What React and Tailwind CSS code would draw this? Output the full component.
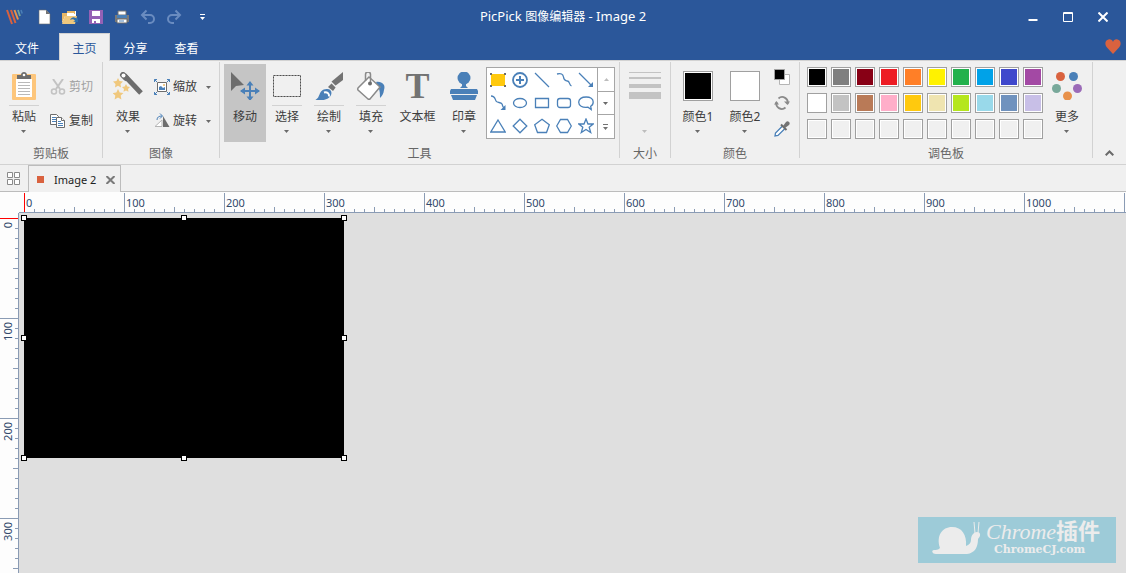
import React, { useEffect, useState } from 'react';
import clsx from 'clsx';

const BLUE = '#4a80b8';
const GRAY = '#737373';

const PALETTE = [
    '#000000', '#7f7f7f', '#880015', '#ed1c24', '#ff7f27', '#fff200', '#22b14c', '#00a2e8', '#3f48cc', '#a349a4',
    '#ffffff', '#c3c3c3', '#b97a57', '#ffaec9', '#ffc90e', '#efe4b0', '#b5e61d', '#99d9ea', '#7092be', '#c8bfe7',
    '#f0f0f0', '#f0f0f0', '#f0f0f0', '#f0f0f0', '#f0f0f0', '#f0f0f0', '#f0f0f0', '#f0f0f0', '#f0f0f0', '#f0f0f0',
];

const TICKS = [0, 1, 2, 3, 4, 5, 6, 7, 8, 9];

function Caret({ light }) {
    return (
        <svg width="6" height="3" viewBox="0 0 6 3" className="block shrink-0">
            <path d="M0 0h5L2.500 3z" fill={light ? '#bdbdbd' : '#6a6a6a'} />
        </svg>
    );
}

/* ---------- quick access icons ---------- */

function Logo() {
    return (
        <svg width="17" height="16" viewBox="0 0 17 16" fill="none" strokeWidth="2">
            <path d="M1 1l5 14" stroke="#d9623f" />
            <path d="M5 1l4.500 13" stroke="#d9623f" />
            <path d="M8.500 1l3.500 9.500" stroke="#e8934a" />
            <path d="M12 1l2 6" stroke="#78a89a" strokeWidth="1.800" />
            <path d="M15 1l1.200 3.500" stroke="#4a80b8" strokeWidth="1.500" />
        </svg>
    );
}

function NewIcon() {
    return (
        <svg width="16" height="16" viewBox="0 0 16 16">
            <path d="M3 1h7l4 4v10H3z" fill="#fff" stroke="#6d6d6d" strokeWidth=".6" />
            <path d="M10 1v4h4z" fill="#737373" />
        </svg>
    );
}

function OpenIcon() {
    return (
        <svg width="18" height="16" viewBox="0 0 18 16">
            <path d="M1 14V4h5V2h9v6H5z" fill="#fff" />
            <path d="M1 14V4h5V2h8v3H8v2H4z" fill="#e8b765" />
            <path d="M6 4h7v3H6z" fill="#fff" />
            <path d="M1 15L4 7h12l-2 8z" fill="#f0c87d" />
            <path d="M9 11c2-4 5-3 7-1l1-2v5h-5l2-1c-1-2-3-2-5-1z" fill="#2f70ad" />
        </svg>
    );
}

function SaveIcon() {
    return (
        <svg width="16" height="16" viewBox="0 0 16 16">
            <path d="M1 1h14v14H1z" fill="#9561b5" />
            <path d="M4 2h8v5H4zM4 10h8v4H4z" fill="#fff" />
            <path d="M6 12h2v2H6z" fill="#9561b5" />
        </svg>
    );
}

function PrintIcon() {
    return (
        <svg width="16" height="16" viewBox="0 0 16 16">
            <path d="M1 6h14v7H1z" fill="#7a7a7a" />
            <path d="M4 2h8v4H4z" fill="#fff" stroke="#737373" />
            <path d="M3 6h10v3H3z" fill="#4a80b8" />
            <path d="M3 10h10v4H3z" fill="#fff" stroke="#6d6d6d" />
            <path d="M5 12h5" stroke="#4a80b8" />
        </svg>
    );
}

function UndoIcon({ flip }) {
    return (
        <svg width="16" height="16" viewBox="0 0 16 16" fill="none" stroke="#6a8cc0" strokeWidth="2">
            {flip
                ? <path d="M9.500 1.500L14 6 9.500 10.500M14 6H6a4 4 0 0 0 0 8h2" />
                : <path d="M6.500 1.500L2 6l4.500 4.500M2 6h8a4 4 0 0 1 0 8H8" />}
        </svg>
    );
}

/* ---------- ribbon icons ---------- */

function PasteIcon() {
    return (
        <svg width="24" height="28" viewBox="0 0 24 28">
            <rect y="2" width="24" height="26" rx="1" fill="#fdc67c" />
            <path d="M4 7h16v18H4z" fill="#fff" />
            <path d="M6 10.500h12M6 13.500h12M6 16.500h12M6 19.500h12M6 22.500h12" stroke="#b9b9b9" />
            <path d="M5 7V3h4c0-4 6-4 6 0h4v4z" fill="#6d6d6d" />
            <circle cx="12" cy="3" r="1.300" fill="#fff" />
        </svg>
    );
}

function CutIcon() {
    return (
        <svg width="16" height="16" viewBox="0 0 16 16" fill="none" stroke="#c3c3c3" strokeWidth="2">
            <path d="M3 0l7 10M13 0L6 10" />
            <circle cx="4" cy="12.500" r="2.500" strokeWidth="1.600" />
            <circle cx="12" cy="12.500" r="2.500" strokeWidth="1.600" />
        </svg>
    );
}

function CopyIcon() {
    return (
        <svg width="16" height="16" viewBox="0 0 16 16" fill="#fff" stroke="#6d6d6d">
            <path d="M.5 1.500h6l2 2v8h-8z" />
            <path d="M2 4.500h4M2 6.500h4M2 8.500h4" stroke={BLUE} />
            <path d="M6.500 4.500h5l3 3v7h-8z" />
            <path d="M11.500 4.500v3h3" />
            <path d="M8 8.500h3M8 10.500h5M8 12.500h5" stroke={BLUE} />
        </svg>
    );
}

function EffectsIcon() {
    return (
        <svg width="30" height="28" viewBox="0 0 30 28">
            <path d="M11 3l17 18" stroke="#6d6d6d" strokeWidth="5" />
            <path d="M10 3l3 3" stroke="#6d6d6d" strokeWidth="6" strokeLinecap="round" />
            <circle cx="10.500" cy="3.500" r="2" fill="#fff" />
            <g fill="#f0c87d">
                <path d="M5 6l1.500 3 3.500.5-2.500 2.500.5 3.500-3-1.700-3 1.700.5-3.500L0 9.500 3.500 9z" />
                <path d="M13 12l1.300 2.500 2.700.4-2 2 .5 2.800-2.500-1.300-2.500 1.300.5-2.800-2-2 2.700-.4z" />
                <path d="M5 17l1.700 3.500 3.800.5-2.800 2.600.7 3.900L5 25.600l-3.400 1.900.7-3.900L-.5 21l3.800-.5z" />
            </g>
        </svg>
    );
}

function ResizeIcon() {
    return (
        <svg width="16" height="16" viewBox="0 0 16 16" fill="none">
            <path d="M3.500 3.500h9v9h-9z" fill="#fff" stroke="#6d6d6d" />
            <path d="M5 11V8l2-1 2 2 2-1v3z" fill={BLUE} />
            <circle cx="10" cy="6" r="1" fill="#e8b765" />
            <path d="M.5 3V.5H3M.5.5L3 3M13 .5h2.500V3m0-2.500L13 3M.5 13v2.500H3M.5 15.500L3 13M13 15.500h2.500V13m0 2.500L13 13" stroke={BLUE} />
        </svg>
    );
}

function RotateIcon() {
    return (
        <svg width="16" height="16" viewBox="0 0 16 16" fill="none">
            <path d="M9 3v11H15.500z" fill="#6d6d6d" />
            <path d="M8 7v6.500H1z" stroke="#b5b5b5" fill="#fff" />
            <path d="M3 7c0-3 2-4 5-4M6 .5L8.500 3 6 5.500" stroke={BLUE} />
        </svg>
    );
}

function MoveIcon() {
    return (
        <svg width="30" height="28" viewBox="0 0 30 28">
            <path d="M1 0v19l5-5 8-1z" fill="#6d6d6d" />
            <path d="M20 10v18M11 19h18" stroke={BLUE} strokeWidth="2" />
            <path d="M16.500 13.500L20 9l3.500 4.500zM16.500 24.500L20 29l3.500-4.500zM15 15.500L10 19l5 3.500zM25 15.500l5 3.500-5 3.500z" fill={BLUE} />
        </svg>
    );
}

function SelectIcon() {
    return (
        <svg width="28" height="28" viewBox="0 0 28 28">
            <path d="M.5 3.500h27v21H.5z" fill="none" stroke="#cfcfcf" />
            <path d="M.5 3.500h27v21H.5z" fill="none" stroke="#4f4f4f" strokeDasharray="2 1" />
        </svg>
    );
}

function BrushIcon() {
    return (
        <svg width="28" height="28" viewBox="0 0 28 28">
            <path d="M28 0v8l-8 6-4-4z" fill="#737373" />
            <path d="M17 11l4 4-3 4-5-4z" fill="#737373" />
            <path d="M15.500 9.500l6 6" stroke="#f0f0f0" strokeWidth="1.200" />
            <path d="M11.500 17c5-.5 6 4 4 7-2 3.500-8 5-16 4.500 4-2 4-4 5-6 1-3 3-5.300 7-5.500z" fill={BLUE} />
            <path d="M9 20.500c3-1 5.500 1 5 4" fill="none" stroke="#fff" strokeWidth="2" />
        </svg>
    );
}

function FillIcon() {
    return (
        <svg width="30" height="28" viewBox="0 0 30 28">
            <path d="M20 10c6-1 10 3 8 8-.5 4-2 6-4 8 0-5 0-9-4-16z" fill={BLUE} />
            <path d="M13 5l11 10-10 12a2 2 0 0 1-2 0L2 18a2 2 0 0 1 0-2z" fill="#fff" stroke="#8a8a8a" strokeWidth="1.500" />
            <path d="M9.500 9V2.500a2.500 2.500 0 0 1 5 0V11" fill="none" stroke="#8a8a8a" strokeWidth="1.500" />
            <circle cx="14" cy="11.500" r="2" fill="#6d6d6d" />
        </svg>
    );
}

function StampIcon() {
    return (
        <svg width="28" height="28" viewBox="0 0 28 28" fill={BLUE}>
            <circle cx="14" cy="6" r="6.500" />
            <path d="M12 10h4v4l2 2H10l2-2zM1 17h26l1 2v3H0v-3zM1 23h26l-2 5H3z" />
        </svg>
    );
}

function MoreIcon() {
    return (
        <svg width="30" height="28" viewBox="0 0 30 28">
            <circle cx="8.500" cy="4.500" r="4.500" fill="#d9623f" />
            <circle cx="21.500" cy="4.500" r="4.500" fill={BLUE} />
            <circle cx="4.500" cy="16.500" r="4.500" fill="#78a89a" />
            <circle cx="25.500" cy="16.500" r="4.500" fill="#9b6bb8" />
            <circle cx="15.500" cy="24" r="4.500" fill="#e8914a" />
        </svg>
    );
}

const SHAPES = [
    ['图章', <><path d="M1 2h14v12H1z" fill="#ffc90e" stroke="none" /><path d="M0 1h2v2H0zM14 1h2v2h-2zM0 13h2v2H0zM14 13h2v2h-2z" fill="#6d6d6d" stroke="none" /></>],
    ['放大', <><circle cx="8" cy="8" r="7" strokeWidth="1.800" /><path d="M8 4v8M4 8h8" strokeWidth="2" /></>],
    ['直线', <path d="M1 1l14 14" />],
    ['曲线', <path d="M1 2c4-1 6 0 6.500 3 .5 4 2 3.500 4 4 2.500.5 1.500 4 4 5" />],
    ['箭头', <><path d="M1 1l13 13" /><path d="M15 15v-5l-5 5z" fill={BLUE} stroke="none" /></>],
    ['曲线箭头', <><path d="M1 1c4 0 4 3 5 5s5 1 6 3 0 2 2 4" /><path d="M15.500 15v-5l-5 5z" fill={BLUE} stroke="none" /></>],
    ['椭圆', <ellipse cx="8" cy="8" rx="6.500" ry="4.500" />],
    ['矩形', <path d="M1.500 3.500h13v9h-13z" />],
    ['圆角矩形', <rect x="1.500" y="3.500" width="13" height="9" rx="2.500" />],
    ['气泡', <path d="M10 12.200C4 13 .7 10.500.7 7.300c0-3.500 3-5.300 7.500-5.300 4 0 7 2 7 5 0 2-1 3.500-2.500 4.300l.5 3.200z" />],
    ['三角形', <path d="M8 2L15.200 14H.8z" />],
    ['菱形', <path d="M8 1.200L14.800 8 8 14.800 1.200 8z" />],
    ['五边形', <path d="M8 1.200l7.300 5.500L12.500 14.500h-9L.7 6.700z" />],
    ['六边形', <path d="M4.500 1.500h7L15.300 8l-3.800 6.500h-7L.7 8z" />],
    ['星形', <path d="M8 1l2 5h5.200l-4 3.300 1.500 5.200L8 11.500l-4.700 3 1.500-5.200L.8 6H6z" />],
];

/* ---------- ribbon building blocks ---------- */

function Group({ title, className, children }) {
    return (
        <>
            <section className="flex shrink-0 flex-col pt-[3px]" aria-label={title}>
                <div className={clsx('flex h-[78px]', className)}>{children}</div>
                <div className="mt-1 text-center text-xs leading-4 text-[#666666]">{title}</div>
            </section>
            <div className="mt-px h-24 w-px shrink-0 bg-[#d2d2d2]" />
        </>
    );
}

function BigButton({ label, icon, width = 'w-[42px]', line, caret, light, active }) {
    return (
        <button
            aria-label={label || '线条大小'}
            className={clsx('flex shrink-0 flex-col items-center pt-2', width, active && 'bg-[#c5c5c5]')}
        >
            <span className="flex h-7 items-center justify-center">{icon}</span>
            <span className={clsx('mt-[5px] h-px w-[30px]', line && 'bg-[#d2d2d2]')} />
            <span className="mt-[3px] h-4 text-xs leading-4 whitespace-nowrap">{label}</span>
            <span className="mt-[5px]">{caret && <Caret light={light} />}</span>
        </button>
    );
}

function SmallButton({ label, icon, caret, disabled }) {
    return (
        <button disabled={disabled} className={clsx('flex h-[34px] items-center pl-[5px]', disabled && 'text-[#a0a0a0]')}>
            {icon}
            <span className="ml-[3px] text-xs leading-4">{label}</span>
            {caret && <span className="ml-[9px]"><Caret /></span>}
        </button>
    );
}

function ColorBox({ color }) {
    return (
        <span className="h-[30px] w-[30px] border border-[#a0a0a0] bg-white p-px">
            <span className="block h-full w-full" style={{ backgroundColor: color }} />
        </span>
    );
}

/* ---------- rulers and canvas ---------- */

function useWindowSize() {
    const [size, setSize] = useState({ width: window.innerWidth, height: window.innerHeight });

    useEffect(() => {
        const onResize = () => setSize({ width: window.innerWidth, height: window.innerHeight });
        window.addEventListener('resize', onResize);
        return () => window.removeEventListener('resize', onResize);
    }, []);

    return size;
}

// one entry per 100px; the label is dropped when there is no room left for it
function getSegments(length) {
    const total = Math.max(1, Math.ceil(length / 100));
    return Array.from({ length: total }, (_, n) => ({ n, showLabel: n * 100 + 32 < length }));
}

function TopRuler({ length }) {
    return (
        <div className="flex h-[21px] bg-[#fdfdfd] pt-px">
            <div className="w-[19px] shrink-0" />
            <div className="flex flex-1 overflow-hidden border-b border-[#8a9bb4] pl-[5px]">
                {getSegments(length).map(({ n, showLabel }) => (
                    <div key={n} className="relative flex w-[100px] shrink-0 items-end">
                        {TICKS.map((t) => (
                            <span
                                key={t}
                                className={clsx(
                                    'w-[10px] border-l',
                                    n === 0 && t === 0 ? 'border-[#ff0000]' : 'border-[#8a9bb4]',
                                    t === 0 ? 'h-full' : t === 5 ? 'h-[5px]' : 'h-[3px]'
                                )}
                            />
                        ))}
                        {showLabel && (
                            <span className="absolute top-[3px] left-[2px] text-[11px] leading-[14px] text-[#31496b]">{n * 100}</span>
                        )}
                    </div>
                ))}
            </div>
        </div>
    );
}

function LeftRuler({ length }) {
    return (
        <div className="w-[19px] shrink-0 overflow-hidden border-r border-[#8a9bb4] bg-[#fdfdfd] pt-[5px]">
            {getSegments(length).map(({ n, showLabel }) => (
                <div key={n} className="relative flex h-[100px] flex-col items-end">
                    {TICKS.map((t) => (
                        <span
                            key={t}
                            className={clsx(
                                'h-[10px] border-t',
                                n === 0 && t === 0 ? 'border-[#ff0000]' : 'border-[#8a9bb4]',
                                t === 0 ? 'w-full' : t === 5 ? 'w-[5px]' : 'w-[3px]'
                            )}
                        />
                    ))}
                    {showLabel && (
                        <span className="absolute top-1 left-px rotate-180 text-[11px] leading-[14px] text-[#31496b] [writing-mode:vertical-rl]">
                            {n * 100}
                        </span>
                    )}
                </div>
            ))}
        </div>
    );
}

const HANDLES = [
    '-top-[3px] -left-[3px]',
    '-top-[3px] left-[157px]',
    '-top-[3px] -right-[3px]',
    'top-[117px] -left-[3px]',
    'top-[117px] -right-[3px]',
    '-bottom-[3px] -left-[3px]',
    '-bottom-[3px] left-[157px]',
    '-bottom-[3px] -right-[3px]',
];

function Canvas() {
    return (
        <main className="flex-1 overflow-hidden bg-[#dfdfdf] p-[5px]">
            <div className="relative h-[240px] w-[320px] bg-black">
                {HANDLES.map((pos) => (
                    <span key={pos} className={clsx('absolute h-[6px] w-[6px] border border-black bg-white', pos)} />
                ))}
            </div>
        </main>
    );
}

function Watermark() {
    return (
        <div className="absolute right-[10px] bottom-[10px] flex h-[46px] w-[198px] bg-[#9dcbd8] text-[#ececec]">
            <svg width="68" height="46" viewBox="0 0 68 46" fill="#ececec" className="shrink-0">
                <path d="M16 33c2 0 4 0 6-2C18 19 24 10 34 10c10 0 15 8 14 19 3-1 5-3 5-6 0-5 3-8 6-8 4 0 4 4 1 7 0 8-3 14-11 15H18c-4 0-5-4-2-4z" />
                <path d="M57 16l-1-11M60 16l1-11" stroke="#ececec" strokeWidth="1" />
            </svg>
            <div className="flex flex-col pt-[3px]">
                <span className="font-['Liberation_Serif','Noto_Sans_CJK_SC',serif] text-[22px] leading-6 font-bold whitespace-nowrap">
                    <i className="font-normal">Chrome</i>插件
                </span>
                <span className="pl-2 font-['DejaVu_Serif',serif] text-[11px] leading-3 font-bold">ChromeCJ.com</span>
            </div>
        </div>
    );
}

/* ---------- page ---------- */

function TitleBar() {
    const quick = [
        ['新建', <NewIcon />],
        ['打开', <OpenIcon />],
        ['保存', <SaveIcon />],
        ['打印', <PrintIcon />],
        ['撤销', <UndoIcon />],
        ['重做', <UndoIcon flip />],
    ];
    return (
        <div className="flex h-[33px] items-center">
            <div className="flex flex-1 items-center pl-[6px]">
                <Logo />
                <div className="ml-2 flex">
                    {quick.map(([name, icon]) => (
                        <button key={name} aria-label={name} className="flex h-6 w-[26px] items-center justify-center">{icon}</button>
                    ))}
                    <button aria-label="自定义快速访问工具栏" className="flex h-6 w-[30px] items-center justify-center">
                        <svg width="5" height="6" viewBox="0 0 5 6" fill="#fff">
                            <path d="M0 0h5v1H0zM0 3h5L2.500 6z" />
                        </svg>
                    </button>
                </div>
            </div>
            <h1 className="text-[13px] leading-4">
                PicPick <span className="text-xs leading-4">图像编辑器</span> - Image 2
            </h1>
            <div className="flex flex-1 justify-end pr-[6px]">
                <button aria-label="最小化" className="flex h-8 w-[35px] items-center justify-center">
                    <svg width="10" height="10" viewBox="0 0 10 10"><path d="M.5 7h9v2h-9z" fill="#fff" /></svg>
                </button>
                <button aria-label="最大化" className="flex h-8 w-[35px] items-center justify-center">
                    <svg width="10" height="10" viewBox="0 0 10 10" fill="none" stroke="#fff"><path d="M.5.5h9v9h-9zM0 1.500h10" /></svg>
                </button>
                <button aria-label="关闭" className="flex h-8 w-[35px] items-center justify-center">
                    <svg width="10" height="10" viewBox="0 0 10 10" stroke="#fff" strokeWidth="2"><path d="M.5.5l9 9M9.500.5l-9 9" /></svg>
                </button>
            </div>
        </div>
    );
}

function MenuTabs() {
    return (
        <nav className="flex h-[27px] text-xs leading-4">
            <button className="mr-[5px] w-[54px] pt-[5px]">文件</button>
            <button className="relative -mb-px h-7 w-[51px] border-x border-t border-[#d2d2d2] bg-[#f0f0f0] pt-[3px] text-[#2b579a]">主页</button>
            <button className="w-[51px] pt-[5px]">分享</button>
            <button className="w-[51px] pt-[5px]">查看</button>
            <button aria-label="捐助" className="mr-[5px] ml-auto">
                <svg width="16" height="15" viewBox="0 0 16 15">
                    <path d="M8 15L2 8.500C-1 5 .5 1 3.500.5 5.500 0 7.500 1 8 3 8.500 1 10.500 0 12.500.5c3 .5 4.500 4.500 1.500 8z" fill="#d9623f" />
                </svg>
            </button>
        </nav>
    );
}

function Ribbon() {
    return (
        <div className="flex h-[105px] border-y border-[#d2d2d2] bg-[#f0f0f0] text-[#3c3c3c]">
            <Group title="剪贴板" className="pr-[7px] pl-[3px]">
                <BigButton label="粘贴" icon={<PasteIcon />} line caret />
                <div className="flex w-[50px] flex-col pt-[6px]">
                    <SmallButton label="剪切" icon={<CutIcon />} disabled />
                    <SmallButton label="复制" icon={<CopyIcon />} />
                </div>
            </Group>

            <Group title="图像" className="px-1">
                <BigButton label="效果" icon={<EffectsIcon />} caret />
                <div className="flex w-[66px] flex-col pt-[6px]">
                    <SmallButton label="缩放" icon={<ResizeIcon />} caret />
                    <SmallButton label="旋转" icon={<RotateIcon />} caret />
                </div>
            </Group>

            <Group title="工具" className="px-1">
                <BigButton label="移动" icon={<MoveIcon />} active />
                <BigButton label="选择" icon={<SelectIcon />} line caret />
                <BigButton label="绘制" icon={<BrushIcon />} line caret />
                <BigButton label="填充" icon={<FillIcon />} line caret />
                <BigButton
                    label="文本框"
                    width="w-[51px]"
                    icon={<span className="font-['Liberation_Serif',serif] text-[36px] leading-7 font-bold text-[#737373]">T</span>}
                />
                <BigButton label="印章" icon={<StampIcon />} caret />
                <div className="mt-[3px] ml-px flex h-[72px] border border-[#a6a6a6] bg-white">
                    <div className="grid grid-cols-[repeat(5,22px)] grid-rows-[repeat(3,23px)]">
                        {SHAPES.map(([name, shape]) => (
                            <button key={name} aria-label={name} className="flex items-center justify-center">
                                <svg width="16" height="16" viewBox="0 0 16 16" fill="none" stroke={BLUE} strokeWidth="1.300">{shape}</svg>
                            </button>
                        ))}
                    </div>
                    <div className="flex w-[17px] flex-col divide-y divide-[#a6a6a6] border-l border-[#a6a6a6]">
                        <button aria-label="上一行" className="flex flex-1 items-center justify-center">
                            <span className="rotate-180"><Caret light /></span>
                        </button>
                        <button aria-label="下一行" className="flex flex-1 items-center justify-center"><Caret /></button>
                        <button aria-label="更多形状" className="flex flex-1 items-center justify-center">
                            <svg width="6" height="6" viewBox="0 0 6 6" fill={GRAY}><path d="M0 0h5v1H0zM0 3h5L2.500 6z" /></svg>
                        </button>
                    </div>
                </div>
            </Group>

            <Group title="大小" className="px-1">
                <BigButton
                    caret
                    light
                    icon={
                        <svg width="32" height="28" viewBox="0 0 32 28" fill="#c3c3c3">
                            <path d="M0 0h32v1H0zM0 5h32v2H0zM0 12h32v4H0zM0 20h32v7H0z" />
                        </svg>
                    }
                />
            </Group>

            <Group title="颜色" className="px-1">
                <BigButton label="颜色1" width="w-[46px]" icon={<ColorBox color="#000000" />} caret />
                <div className="w-px" />
                <BigButton label="颜色2" width="w-[46px]" icon={<ColorBox color="#ffffff" />} caret />
                <div className="flex w-[27px] flex-col items-center gap-[10px] pt-[5px]">
                    <button aria-label="默认颜色">
                        <svg width="16" height="16" viewBox="0 0 16 16" className="block">
                            <path d="M5.500 5.500h10v10h-10z" fill="#fff" stroke="#b5b5b5" />
                            <path d="M.5.5h10v10H.5z" stroke="#a0a0a0" />
                        </svg>
                    </button>
                    <button aria-label="交换颜色">
                        <svg width="16" height="16" viewBox="0 0 16 16" fill="none" stroke="#8a8a8a" strokeWidth="1.800" className="block">
                            <path d="M4.500 3.500A5.500 5.500 0 0 1 13.500 9M11.500 12.500A5.500 5.500 0 0 1 2.500 7" />
                            <path d="M10 6.500h6l-2.500 3.500zM0 9.500h5L2.500 6z" fill="#8a8a8a" stroke="none" />
                        </svg>
                    </button>
                    <button aria-label="取色器">
                        <svg width="16" height="16" viewBox="0 0 16 16" fill="none" className="block">
                            <path d="M8.500 5L1.500 12 1 15l3-.5L11 7.500" fill="#fff" stroke={BLUE} strokeWidth="1.300" />
                            <path d="M7 3.500L12.500 9" stroke="#6d6d6d" strokeWidth="2" />
                            <path d="M9 5l3-4c2-2 5 1 3 3l-4 3z" fill="#737373" />
                        </svg>
                    </button>
                </div>
            </Group>

            <Group title="调色板" className="pr-1 pl-[7px]">
                <div className="mt-[3px] mr-[3px] grid h-[72px] grid-cols-[repeat(10,20px)] gap-x-1 gap-y-[6px]">
                    {PALETTE.map((color, i) => (
                        <button key={i} aria-label={`颜色 ${i + 1}`} className="h-5 w-5 border border-[#a0a0a0] bg-white p-px">
                            <span className="block h-full w-full" style={{ backgroundColor: color }} />
                        </button>
                    ))}
                </div>
                <BigButton label="更多" icon={<MoreIcon />} caret />
            </Group>

            <button aria-label="折叠功能区" className="mt-auto mr-3 mb-2 ml-auto">
                <svg width="9" height="6" viewBox="0 0 9 6" fill="none" stroke="#6a6a6a" strokeWidth="2" className="block">
                    <path d="M.7 5.300L4.500 1.500 8.300 5.300" />
                </svg>
            </button>
        </div>
    );
}

function DocumentTabs() {
    return (
        <div className="flex h-[27px] border-b border-[#bcbcbc] bg-[#f0f0f0]">
            <button aria-label="缩略图" className="w-7 pl-[7px]">
                <svg width="13" height="13" viewBox="0 0 13 13" fill="#fff" stroke="#8a8a8a" className="block">
                    <path d="M.5.5h5v5h-5zM7.500.5h5v5h-5zM.5 7.500h5v5h-5zM7.500 7.500h5v5h-5z" />
                </svg>
            </button>
            <div className="-mb-px flex items-center border-x border-t border-[#bcbcbc] bg-[#f0f0f0] pt-px pr-[5px] pl-2">
                <span className="h-[7px] w-[7px] bg-[#d9623f]" />
                <button className="ml-[10px] text-[11px] leading-4 text-[#222222]">Image 2</button>
                <button aria-label="关闭标签" className="ml-[10px]">
                    <svg width="9" height="8" viewBox="0 0 9 8" stroke="#7a7a7a" strokeWidth="2" className="block"><path d="M.5 0l8 8M8.500 0l-8 8" /></svg>
                </button>
            </div>
        </div>
    );
}

export default function App() {
    const { width, height } = useWindowSize();

    return (
        <div className="relative flex h-screen flex-col overflow-hidden bg-[#dfdfdf] font-['Noto_Sans','Noto_Sans_CJK_SC',sans-serif]">
            <header className="shrink-0 bg-[#2b579a] text-white">
                <TitleBar />
                <MenuTabs />
                <Ribbon />
            </header>
            <div className="shrink-0">
                <DocumentTabs />
                <TopRuler length={width - 24} />
            </div>
            <div className="flex min-h-0 flex-1">
                <LeftRuler length={height - 218} />
                <Canvas />
            </div>
            <Watermark />
        </div>
    );
}
